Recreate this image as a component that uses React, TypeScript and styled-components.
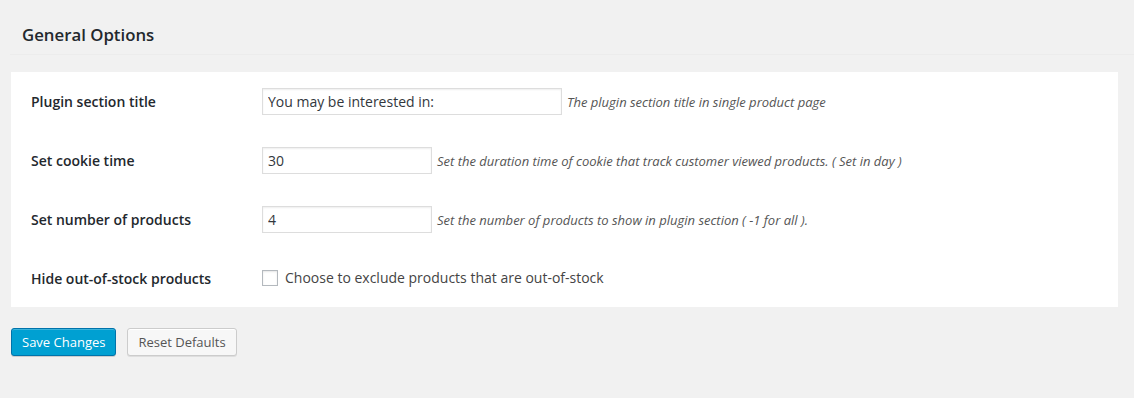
import React from "react";
import styled, { createGlobalStyle } from "styled-components";

const GlobalStyle = createGlobalStyle`
  html, body {
    margin: 0;
    padding: 0;
    background: #f1f1f1;
    font-family: "Open Sans", "Liberation Sans", sans-serif;
    color: #444;
  }
  * { box-sizing: border-box; }
`;

const Page = styled.div`
  width: 1134px;
  height: 398px;
  display: flex;
  flex-direction: column;
  background: #f1f1f1;
`;

const Header = styled.div`
  height: 55px;
  margin-left: 10px;
  padding: 24px 0 0 12px;
  border-bottom: 1px solid #ececec;
`;

const Title = styled.h2`
  margin: 0;
  font-size: 16.8px;
  line-height: 22px;
  font-weight: 600;
  color: #23282d;
`;

const Panel = styled.div`
  margin: 17px 16px 0 11px;
  background: #fff;
  padding: 0 20px;
  display: grid;
  grid-template-columns: 231px 1fr;
  grid-auto-rows: 59px;
  height: 235px;
`;

const Label = styled.div`
  display: flex;
  align-items: center;
  font-size: 14px;
  font-weight: 600;
  color: #23282d;
`;

const Field = styled.div`
  display: flex;
  align-items: center;
  gap: 5px;
`;

const TextInput = styled.input<{ $w: number }>`
  width: ${(p) => p.$w}px;
  height: 27px;
  margin: 0;
  padding: 2px 5px;
  border: 1px solid #ddd;
  box-shadow: inset 0 1px 2px rgba(0, 0, 0, 0.07);
  background: #fff;
  color: #32373c;
  font-family: "Open Sans", "Liberation Sans", sans-serif;
  font-size: 14px;
  outline: none;
`;

const Desc = styled.span`
  font-size: 13px;
  font-style: italic;
  color: #555;
`;

const CheckLabel = styled.label`
  display: flex;
  align-items: center;
  gap: 7px;
  font-size: 14px;
  color: #444;
  margin-top: -2px;
`;

const Box = styled.span`
  width: 16px;
  height: 16px;
  border: 1px solid #b4b9be;
  background: #fff;
  box-shadow: inset 0 1px 2px rgba(0, 0, 0, 0.1);
  display: inline-block;
`;

const Actions = styled.div`
  display: flex;
  gap: 11px;
  margin: 21px 0 0 11px;
`;

const Button = styled.button<{ $primary?: boolean }>`
  height: 28px;
  padding: 0 10px 1px;
  font-family: "Open Sans", "Liberation Sans", sans-serif;
  font-size: 13px;
  line-height: 26px;
  border-radius: 3px;
  border: 1px solid ${(p) => (p.$primary ? "#0073aa" : "#ccc")};
  background: ${(p) => (p.$primary ? "#00a0d2" : "#f7f7f7")};
  color: ${(p) => (p.$primary ? "#fff" : "#555")};
  box-shadow: ${(p) =>
    p.$primary ? "inset 0 1px 0 rgba(120,200,230,.5), 0 1px 0 rgba(0,0,0,.15)" : "inset 0 1px 0 #fff, 0 1px 0 rgba(0,0,0,.08)"};
  cursor: pointer;
`;

export default function App() {
  return (
    <Page>
      <GlobalStyle />
      <Header>
        <Title>General Options</Title>
      </Header>
      <Panel>
        <Label>Plugin section title</Label>
        <Field>
          <TextInput $w={300} defaultValue="You may be interested in:" />
          <Desc>The plugin section title in single product page</Desc>
        </Field>
        <Label>Set cookie time</Label>
        <Field>
          <TextInput $w={170} defaultValue="30" />
          <Desc>Set the duration time of cookie that track customer viewed products. ( Set in day )</Desc>
        </Field>
        <Label>Set number of products</Label>
        <Field>
          <TextInput $w={170} defaultValue="4" />
          <Desc>Set the number of products to show in plugin section ( -1 for all ).</Desc>
        </Field>
        <Label>Hide out-of-stock products</Label>
        <Field>
          <CheckLabel>
            <Box />
            Choose to exclude products that are out-of-stock
          </CheckLabel>
        </Field>
      </Panel>
      <Actions>
        <Button $primary>Save Changes</Button>
        <Button>Reset Defaults</Button>
      </Actions>
    </Page>
  );
}
